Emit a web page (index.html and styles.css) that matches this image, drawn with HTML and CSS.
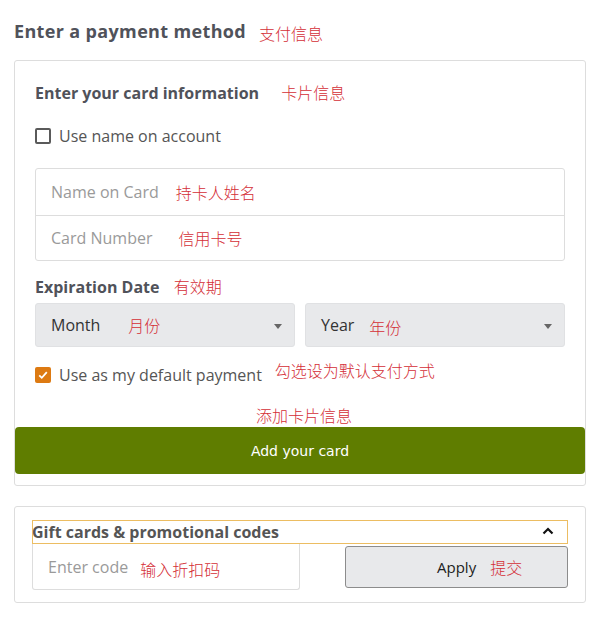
FILE: index.html
```html
<!DOCTYPE html>
<html>
<head>
<meta charset="utf-8">
<link rel="stylesheet" href="styles.css">
</head>
<body>
<div class="page">
  <h1 class="title">Enter a payment method <span class="zh zh-title">支付信息</span></h1>

  <section class="card">
    <h2 class="subtitle">Enter your card information <span class="zh zh-sub">卡片信息</span></h2>

    <label class="check-row">
      <span class="box"></span>
      <span class="check-text">Use name on account</span>
    </label>

    <div class="input-group">
      <div class="field"><span class="ph">Name on Card</span><span class="zh zh-ph1">持卡人姓名</span></div>
      <div class="field"><span class="ph">Card Number</span><span class="zh zh-ph2">信用卡号</span></div>
    </div>

    <h3 class="label">Expiration Date <span class="zh zh-exp">有效期</span></h3>

    <div class="selects">
      <div class="select"><span class="sel-text">Month</span><span class="zh zh-month">月份</span><span class="arrow"></span></div>
      <div class="select"><span class="sel-text">Year</span><span class="zh zh-year">年份</span><span class="arrow"></span></div>
    </div>

    <label class="check-row default-row">
      <span class="box checked">
        <svg width="12" height="12" viewBox="0 0 12 12"><path d="M2.2 6.3 L4.8 8.8 L9.8 3.2" fill="none" stroke="#fff" stroke-width="1.8"/></svg>
      </span>
      <span class="check-text">Use as my default payment</span>
      <span class="zh zh-default">勾选设为默认支付方式</span>
    </label>

    <div class="zh zh-add">添加卡片信息</div>

    <button class="add-btn">Add your card</button>
  </section>

  <section class="card gift-card">
    <div class="gift-head">
      <span class="gift-title">Gift cards &amp; promotional codes</span>
      <svg class="chev" width="12" height="8" viewBox="0 0 12 8"><path d="M1.5 6.5 L6 2 L10.5 6.5" fill="none" stroke="#111" stroke-width="2.2"/></svg>
    </div>
    <div class="gift-row">
      <div class="code-input"><span class="ph">Enter code</span><span class="zh zh-code">输入折扣码</span></div>
      <button class="apply-btn"><span>Apply</span><span class="zh zh-apply">提交</span></button>
    </div>
  </section>
</div>
</body>
</html>
```

FILE: styles.css
```css
* { box-sizing: border-box; }
html, body { margin: 0; padding: 0; background: #fff; }
body {
  font-family: "Open Sans", "Noto Sans", sans-serif;
  color: #555;
}
.page {
  padding: 19px 14px 0 14px;
  width: 600px;
}
.zh {
  font-family: "Noto Sans CJK SC", sans-serif;
  font-weight: 300;
  font-size: 16px;
  letter-spacing: 0;
  color: #d42e36;
}
.title {
  margin: 0;
  font-size: 18px;
  font-weight: 700;
  line-height: 24px;
  letter-spacing: 0.35px;
  color: #50525a;
}
.zh-title { margin-left: 8px; position: relative; top: 2px; }
.card {
  margin-top: 17px;
  border: 1px solid #ddd;
  border-radius: 3px;
  padding: 20px 20px 11px 20px;
}
.subtitle {
  margin: 0;
  font-size: 16px;
  font-weight: 700;
  line-height: 22px;
  color: #50525a;
}
.zh-sub { margin-left: 18px; }
.check-row {
  display: flex;
  align-items: center;
  height: 24px;
  margin-top: 20px;
  font-size: 16px;
  color: #555;
}
.box {
  width: 16px;
  height: 16px;
  border: 2px solid #5a5a5a;
  border-radius: 2px;
  margin-right: 8px;
  display: flex;
  align-items: center;
  justify-content: center;
}
.box.checked {
  border: none;
  background: #dd7a12;
}
.input-group {
  margin-top: 20px;
  border: 1px solid #ddd;
  border-radius: 3px;
}
.field {
  height: 46px;
  display: flex;
  align-items: center;
  padding-left: 15px;
  font-size: 16px;
}
.field + .field { border-top: 1px solid #ddd; height: 45px; }
.ph { color: #9a9a9a; }
.zh-ph1 { margin-left: 17px; }
.zh-ph2 { margin-left: 26px; }
.label {
  margin: 14px 0 0 0;
  font-size: 16px;
  font-weight: 700;
  line-height: 22px;
  color: #50525a;
}
.zh-exp { margin-left: 10px; }
.selects {
  margin-top: 5px;
  display: grid;
  grid-template-columns: 1fr 1fr;
  gap: 10px;
}
.select {
  height: 44px;
  background: #e8e9eb;
  border: 1px solid #e0e1e3;
  border-radius: 3px;
  display: flex;
  align-items: center;
  padding-left: 15px;
  position: relative;
  font-size: 16px;
  color: #333;
}
.zh-month { margin-left: 28px; }
.zh-year { margin-left: 15px; position: relative; top: 2px; }
.arrow {
  position: absolute;
  right: 12px;
  top: 20px;
  width: 0;
  height: 0;
  border-left: 4.5px solid transparent;
  border-right: 4.5px solid transparent;
  border-top: 5px solid #666;
}
.default-row { margin-top: 16px; }
.zh-default { margin-left: 13px; position: relative; top: -5px; }
.zh-add {
  margin-top: 18px;
  text-align: center;
  line-height: 20px;
  padding-left: 8px;
}
.add-btn {
  display: block;
  margin: 2px -20px 0 -20px;
  width: calc(100% + 40px);
  height: 47px;
  border: none;
  border-radius: 4px;
  background: #5f7d00;
  color: #fff;
  font-family: "DejaVu Sans", sans-serif;
  font-size: 14px;
}
.gift-card {
  margin-top: 20px;
  padding: 13px 17px 12px 17px;
}
.gift-head {
  height: 24px;
  border: 1px solid #ecbd62;
  display: flex;
  align-items: center;
  justify-content: space-between;
  padding: 0 13px 0 0;
}
.gift-title {
  font-size: 16px;
  font-weight: 700;
  color: #555;
  margin-left: -1px;
}
.chev { margin-top: -2px; }
.gift-row {
  display: flex;
  justify-content: space-between;
  align-items: flex-start;
}
.code-input {
  width: 268px;
  height: 46px;
  border: 1px solid #ddd;
  border-top: none;
  border-radius: 0 0 3px 3px;
  display: flex;
  align-items: center;
  padding-left: 15px;
  font-size: 16px;
}
.zh-code { margin-left: 12px; position: relative; top: 2px; }
.apply-btn {
  margin-top: 2px;
  width: 223px;
  height: 42px;
  background: #e8e9eb;
  border: 1px solid #8c8c8c;
  border-radius: 3px;
  display: flex;
  align-items: center;
  padding-left: 91px;
  font-family: "Open Sans", sans-serif;
  font-size: 15px;
  color: #222;
}
.zh-apply { margin-left: 14px; }
```
